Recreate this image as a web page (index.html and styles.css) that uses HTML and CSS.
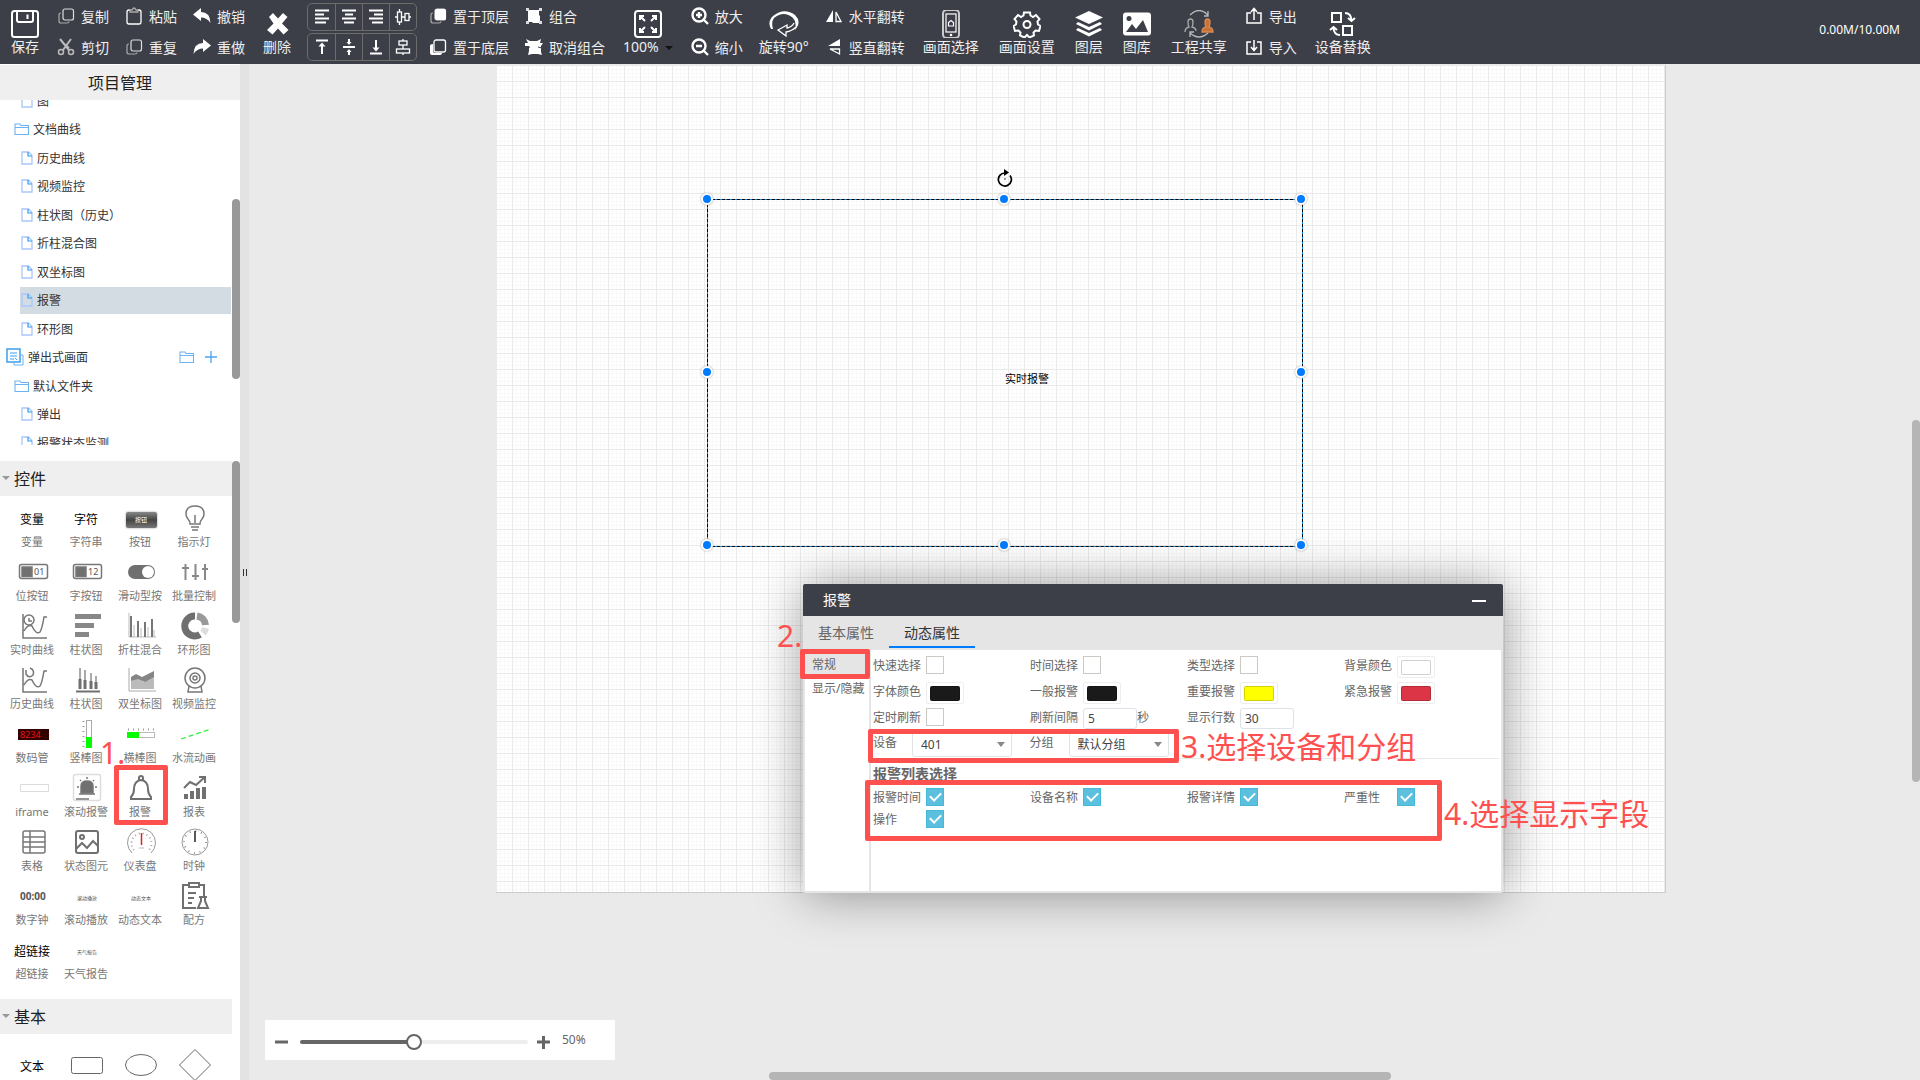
FILE: index.html
```html
<!DOCTYPE html>
<html lang="zh-CN">

<head>
    <meta charset="UTF-8">
    <meta name="viewport" content="width=device-width, initial-scale=1.0">
    <title>项目管理</title>
    <link rel="stylesheet" href="styles.css">
</head>

<body>

    <!-- shared icons -->
    <svg class="sprite">
        <symbol id="i-file" viewBox="0 0 12 14">
            <path d="M1 1h6.500l3.500 3.500V13H1z" fill="none" stroke="#a9c6fb" stroke-width="1.300" />
            <path d="M7 1v4h4" fill="none" stroke="#2f9bf0" stroke-width="1.200" />
        </symbol>
        <symbol id="i-folder" viewBox="0 0 16 14">
            <path d="M1 12.500V2h5l1 1.500h7.500v9z" fill="none" stroke="#6db3f2" stroke-width="1.100" />
            <path d="M1 5.500h13.500" stroke="#6db3f2" />
        </symbol>
        <symbol id="i-copy" viewBox="0 0 18 18">
            <rect x="6" y="2" width="10.500" height="11" rx="2" fill="none" stroke="#ddd" stroke-width="1.200" />
            <path d="M4 6q-2 0-2 2v6q0 2 2 2h6q2 0 2-1.500" fill="none" stroke="#aaa" stroke-width="1.200" />
        </symbol>
        <symbol id="i-undo" viewBox="0 0 18 18">
            <path d="M0 7.500L8 1v4q9 0 9.500 11Q14 10.500 8 10.500V14z" fill="#fff" />
        </symbol>
    </svg>

    <header class="toolbar">
        <button class="big">
            <svg viewBox="0 0 28 28" class="line"><rect x="1" y="1" width="26" height="26" rx="2.500" /><path d="M6 1v9q0 2 2 2h12q2 0 2-2V1M16.500 4.500v4.500" /></svg>
            <span>保存</span>
        </button>
        <div class="pairs">
            <button><svg><use href="#i-copy" /></svg>复制</button>
            <button><svg viewBox="0 0 18 18" class="line gray"><path d="M3 1l9 11M14 1L6 12M6 5l6 5" stroke-width="2" /><circle cx="4" cy="14" r="2.500" /><circle cx="14" cy="14" r="2.500" /></svg>剪切</button>
        </div>
        <div class="pairs">
            <button><svg viewBox="0 0 18 18" class="line thin"><path d="M5 3H4Q2 3 2 5v10q0 2 2 2h10q2 0 2-2V5q0-2-2-2h-1" /><path d="M5 5V3h2q2-4 4 0h2v2z" stroke="#aaa" /></svg>粘贴</button>
            <button><svg><use href="#i-copy" /></svg>重复</button>
        </div>
        <div class="pairs">
            <button><svg><use href="#i-undo" /></svg>撤销</button>
            <button><svg class="flip"><use href="#i-undo" /></svg>重做</button>
        </div>
        <button class="big">
            <svg viewBox="0 0 28 28"><path d="M6 7l4-4 5 5.500L20 3l4.500 4-5.500 6.500 6.500 6.500-5 4.500-5.500-6-5.500 6L4 20l6.500-6.500z" fill="#fff" /></svg>
            <span>删除</span>
        </button>
        <div class="align">
            <div class="align-row">
                <button aria-label="左对齐"><svg viewBox="0 0 16 16" class="line"><path d="M1 1.500h14M1 5.500h9M1 9.500h14M1 13.500h11" /></svg></button>
                <button aria-label="居中对齐"><svg viewBox="0 0 16 16" class="line"><path d="M1 1.500h14M4 5.500h8M1 9.500h14M3 13.500h10" /></svg></button>
                <button aria-label="右对齐"><svg viewBox="0 0 16 16" class="line"><path d="M1 1.500h14M6 5.500h9M1 9.500h14M4 13.500h11" /></svg></button>
                <button aria-label="水平居中"><svg viewBox="0 0 16 16" class="line thin"><rect x="2.500" y="3" width="4" height="10" /><rect x="10" y="4.500" width="4" height="7" /><path d="M0 8h2.500M6.500 8H10M14 8h2M4.500 0v3M4.500 13v3" /></svg></button>
            </div>
            <div class="align-row">
                <button aria-label="顶部对齐"><svg viewBox="0 0 16 16" class="line"><path d="M2 1.500h12M8 6v9" /><path d="M4.500 7.500L8 3.500l3.500 4z" class="solid" /></svg></button>
                <button aria-label="中部对齐"><svg viewBox="0 0 16 16" class="line"><path d="M2 8h12M8 0v3M8 13v3" /><path d="M5.500 3L8 6l2.500-3zM5.500 13L8 10l2.500 3z" class="solid" /></svg></button>
                <button aria-label="底部对齐"><svg viewBox="0 0 16 16" class="line"><path d="M2 14.500h12M8 1v9" /><path d="M4.500 8.500L8 12.500l3.500-4z" class="solid" /></svg></button>
                <button aria-label="垂直居中"><svg viewBox="0 0 16 16" class="line thin"><rect x="4" y="2" width="8" height="4" /><rect x="1.500" y="10" width="13" height="4" /><path d="M8 0v2M8 6v4M8 14v2" /></svg></button>
            </div>
        </div>
        <div class="pairs">
            <button><svg viewBox="0 0 18 18"><use href="#i-copy" /><rect x="6" y="2" width="11" height="11" rx="2" fill="#fff" /></svg>置于顶层</button>
            <button><svg viewBox="0 0 18 18"><path d="M1 8q0-2 3-2v7q0 2 2 2h7q0 2-2 2H3q-2 0-2-2z" fill="#fff" /><rect x="5" y="2" width="11.500" height="12" rx="2" class="line thin" /></svg>置于底层</button>
        </div>
        <div class="pairs">
            <button><svg viewBox="0 0 18 18"><path d="M3 3h11v5l1 1v7H8l-1-1H3z" fill="#fff" /><path d="M1 1h3v3H1zM14 1h3v3h-3zM1 14h3v3H1zM14 14h3v3h-3z" fill="#ddd" /></svg>组合</button>
            <button><svg viewBox="0 0 18 18"><path d="M1 1l4 2h7l4-2-1 4h3l-2 3v6l1 3-4-1H7l-4 1 1-4V8H0V5h3z" fill="#fff" /><path d="M13 9l4 1M1 10l4-1" stroke="#3d3f48" /></svg>取消组合</button>
        </div>
        <button class="big">
            <svg viewBox="0 0 28 28" class="line"><rect x="1" y="1" width="26" height="26" rx="3" /><path d="M11 11L6.500 6.500M6 10V6h4M17 11l4.500-4.500M18 6h4v4M11 17l-4.500 4.500M6 18v4h4M17 17l4.500 4.500M22 18v4h-4" /></svg>
            <span>100%<i class="caret"></i></span>
        </button>
        <div class="pairs">
            <button><svg viewBox="0 0 18 18" class="line bold"><circle cx="8" cy="8" r="6.500" /><path d="M13 13l4 4M5 8h6M8 5v6" /></svg>放大</button>
            <button><svg viewBox="0 0 18 18" class="line bold"><circle cx="8" cy="8" r="6.500" /><path d="M13 13l4 4M5 8h6" /></svg>缩小</button>
        </div>
        <button class="big tight">
            <svg viewBox="0 0 30 28" class="wide"><path d="M2 19Q-2 12 4 6q11-9 22-1 6 6 2 12l-2 3q2-8-2-12Q15 0 5 8q-3 4-1 11z" fill="#fff" /><path d="M27 17q-4 4-10 5v4l-8-6 9-5v3q5-1 7-5" class="line thin" /></svg>
            <span>旋转90°</span>
        </button>
        <div class="pairs">
            <button><svg viewBox="0 0 18 18"><path d="M8 3v12H1z" fill="#fff" /><path d="M11 5v9.500h5z" class="line thin" /></svg>水平翻转</button>
            <button><svg viewBox="0 0 18 18"><path d="M15 1v7H3z" fill="#fff" /><path d="M5 11h9.500v5z" class="line thin" /></svg>竖直翻转</button>
        </div>
        <button class="big">
            <svg viewBox="0 0 28 28" class="line"><rect x="6" y="0" width="16" height="28" rx="3.500" stroke="#ccc" /><rect x="9" y="4" width="10" height="18" stroke-width="1.200" /><path d="M11.500 12.500l2.500-2 2.500 2V16h-5z" stroke-width="1.200" /><circle cx="14" cy="25" r="1.300" class="solid" /></svg>
            <span>画面选择</span>
        </button>
        <button class="big">
            <svg viewBox="0 0 28 28" class="line"><path d="M11 2.500h6l.500 3 2.500 1.500 3-2 3.500 4-2 2.500.500 3 2.500 1.500-1.500 5-3.500-.500-2 2 .500 3-4.500 2-2.500-2.500-2.500 2.500-4.500-2 .500-3-2-2-3.500.500-1.500-5L3 14.500l.500-3-2-2.500L5 5l3 2 2.500-1.500z" /><circle cx="14" cy="14.500" r="3.500" /></svg>
            <span>画面设置</span>
        </button>
        <button class="big">
            <svg viewBox="0 0 28 28"><path d="M14 1l14 6.500L14 14 0 7.500z" fill="#fff" /><path d="M3 12l-2 2 13 6.500L27 14l-2-2-11 5zM3 18l-2 2 13 6.500L27 20l-2-2-11 5z" fill="#fff" /></svg>
            <span>图层</span>
        </button>
        <button class="big">
            <svg viewBox="0 0 28 28"><rect x="0" y="2.500" width="28" height="23" rx="3" fill="#fff" /><circle cx="6" cy="8.500" r="2.500" fill="#3d3f48" /><path d="M3 22l6-8 4 5 7-9 5 12z" fill="#3d3f48" /></svg>
            <span>图库</span>
        </button>
        <button class="big">
            <svg viewBox="0 0 30 28" class="wide line thin"><path d="M6 5q9-9 18 0M24 1v5h-4M6 23q9 8 18 0M6 27v-5h4" stroke="#bbb" /><path d="M1 22q0-4 4-5-1-2-1-5 0-3 2.500-3T9 12q0 3-1 5 4 1 4 4" stroke="#aaa" /><path d="M18 22q0-4 4-5-1-2-1-5 0-3 2.500-3T26 12q0 3-1 5 4 1 4 5z" fill="#c87137" stroke="#d98a55" /></svg>
            <span>工程共享</span>
        </button>
        <div class="pairs">
            <button><svg viewBox="0 0 18 18" class="line"><path d="M6 6H2v10h14V6h-4M9 13V2M6 5l3-3.500L12 5" stroke-width="1.500" /></svg>导出</button>
            <button><svg viewBox="0 0 18 18" class="line"><path d="M6 4H2v12h14V4h-4M9 2v10M6 9l3 3.500L12 9" stroke-width="1.500" /></svg>导入</button>
        </div>
        <button class="big">
            <svg viewBox="0 0 28 28" class="line"><rect x="3" y="3" width="9" height="9" /><rect x="14" y="16" width="9" height="9" /><path d="M16 3q6 0 6.500 7M19 8l3.500 3L26 8M11 25q-6 0-6.500-7M1 20l3.500-3L8 20" /></svg>
            <span>设备替换</span>
        </button>
        <span class="quota">0.00M/10.00M</span>
    </header>

    <main>
        <aside>
            <h2 class="side-title">项目管理</h2>
            <div class="tree-box">
                <ul class="tree">
                    <li class="page"><svg><use href="#i-file" /></svg>图</li>
                    <li class="folder"><svg><use href="#i-folder" /></svg>文档曲线</li>
                    <li class="page"><svg><use href="#i-file" /></svg>历史曲线</li>
                    <li class="page"><svg><use href="#i-file" /></svg>视频监控</li>
                    <li class="page"><svg><use href="#i-file" /></svg>柱状图（历史）</li>
                    <li class="page"><svg><use href="#i-file" /></svg>折柱混合图</li>
                    <li class="page"><svg><use href="#i-file" /></svg>双坐标图</li>
                    <li class="page active"><svg><use href="#i-file" /></svg>报警</li>
                    <li class="page"><svg><use href="#i-file" /></svg>环形图</li>
                    <li class="root">
                        <svg viewBox="0 0 18 18" fill="none" stroke="#3ba0f0"><path d="M1 1h13v13H1z" stroke-width="1.500" /><path d="M4 5h7M4 8h7M4 11h4M9 10l2 2" /><path d="M14.500 7H17v10H8v-2.500" stroke="#6db3f2" /></svg>
                        <span>弹出式画面</span>
                        <button aria-label="新建文件夹"><svg><use href="#i-folder" /></svg></button>
                        <button aria-label="新建画面"><svg viewBox="0 0 16 14"><path d="M8 1v12M2 7h12" stroke="#4aa3f0" stroke-width="1.300" /></svg></button>
                    </li>
                    <li class="folder"><svg><use href="#i-folder" /></svg>默认文件夹</li>
                    <li class="page"><svg><use href="#i-file" /></svg>弹出</li>
                    <li class="page"><svg><use href="#i-file" /></svg>报警状态监测</li>
                </ul>
                <i class="thumb thumb-tree"></i>
            </div>

            <div class="widgets">
                <h3><i class="arrow"></i>控件</h3>
                <div class="items">
                    <button><b>变量</b><span>变量</span></button>
                    <button><b>字符</b><span>字符串</span></button>
                    <button><em class="demo-btn">按钮</em><span>按钮</span></button>
                    <button><svg viewBox="0 0 32 32" class="g1"><path d="M11 22q0-3-2-5-2-2-2-5 0-8 9-8t9 8q0 3-2 5-2 2-2 5zM12 25h8M13 28h6M16 13v8" /></svg><span>指示灯</span></button>

                    <button><svg viewBox="0 0 32 32" class="g1"><rect x="2.500" y="8.500" width="28" height="14" rx="2" /><rect x="5" y="11" width="10" height="9.500" class="fill" /><text x="17" y="19" font-size="9">01</text></svg><span>位按钮</span></button>
                    <button><svg viewBox="0 0 32 32" class="g1"><rect x="2.500" y="8.500" width="28" height="14" rx="2" /><rect x="5" y="11" width="10" height="9.500" class="fill" /><text x="17" y="19" font-size="9">12</text></svg><span>字按钮</span></button>
                    <button><svg viewBox="0 0 32 32"><rect x="3" y="9" width="27" height="14" rx="7" fill="#707070" /><circle cx="23" cy="16" r="6" fill="#fff" /></svg><span>滑动型按</span></button>
                    <button><svg viewBox="0 0 32 32" class="g2 soft"><path d="M6.500 8v16M16.500 8v16M26 8v16M3 12h7M13 20h7M23 13h6" /></svg><span>批量控制</span></button>

                    <button><svg viewBox="0 0 32 32" class="g1"><path d="M6 4v24h24M7 21q4-7 8-5 4 9 8 6 2-3 4-15h3" /><circle cx="12" cy="10" r="5" /><path d="M12 8v3h3" /></svg><span>实时曲线</span></button>
                    <button><svg viewBox="0 0 32 32"><path d="M4 4h26v5H4zM4 13h19v5H4zM4 22h14v5H4z" fill="#888" /></svg><span>柱状图</span></button>
                    <button><svg viewBox="0 0 32 32" fill="none"><path d="M4 3v24h27" stroke="#bbb" /><path d="M6 6v21M13 11v16M20 12v15M27 9v18" stroke="#777" stroke-width="2" /><path d="M9 15v12M16 18v9M23 17v10M29 20v7" stroke="#bbb" /></svg><span>折柱混合</span></button>
                    <button><svg viewBox="0 0 32 32" fill="none" stroke-width="7"><path d="M16 6A10 10 0 1 0 21 24.500" stroke="#6f6f6f" /><path d="M18 6A10 10 0 0 1 26.500 15" stroke="#999" /><path d="M26.500 18A10 10 0 0 1 24 23" stroke="#ddd" /></svg><span>环形图</span></button>

                    <button><svg viewBox="0 0 32 32" class="g1"><path d="M6 4v24h24M7 21q4-7 8-5 4 9 8 6 2-3 4-15h3M9 6v4q3 5 7 1 2-5-3-7" /></svg><span>历史曲线</span></button>
                    <button><svg viewBox="0 0 32 32" fill="none"><path d="M9 4v21M14 6v19M20 9v16M25 12v13" stroke="#aaa" stroke-width="2" /><path d="M9 15v10M14 16v9M20 17v8M25 18v7" stroke="#707070" stroke-width="3" /><path d="M5 27.500h24" stroke="#707070" stroke-width="2" /></svg><span>柱状图</span></button>
                    <button><svg viewBox="0 0 32 32"><path d="M4 4v23h27" fill="none" stroke="#aaa" /><path d="M6 25v-8l7-3 6 4 10-7v14z" fill="#bbb" /><path d="M6 17v-4l5-3 6 3 12-6v6l-9 5-7-3z" fill="#858585" /></svg><span>双坐标图</span></button>
                    <button><svg viewBox="0 0 32 32" class="g1"><circle cx="16" cy="14" r="10" /><circle cx="16" cy="14" r="5" /><circle cx="16" cy="14" r="2" /><path d="M10 22l-1 6h14l-1-6" /></svg><span>视频监控</span></button>

                    <button><svg viewBox="0 0 32 32"><rect x="1" y="11" width="31" height="11" fill="#300" /><text x="3" y="20" font-size="9" class="led">8234</text></svg><span>数码管</span></button>
                    <button><svg viewBox="0 0 32 32"><rect x="15.500" y="2.500" width="5" height="27" fill="none" stroke="#aaa" /><rect x="15" y="19" width="6" height="11" fill="#0f0" /><path d="M12.500 3v27" stroke="#999" stroke-width="2" stroke-dasharray="1 4" /></svg><span>竖棒图</span></button>
                    <button><svg viewBox="0 0 32 32"><rect x="2.500" y="14.500" width="27" height="5" fill="none" stroke="#bbb" /><rect x="2" y="14" width="12" height="6" fill="#0f0" /><path d="M3 11.500h28" stroke="#999" stroke-width="2" stroke-dasharray="1 4" /></svg><span>横棒图</span></button>
                    <button><svg viewBox="0 0 32 32"><path d="M2 21l30-10" stroke="#3e4" stroke-width="1.300" stroke-dasharray="5 3" /></svg><span>水流动画</span></button>

                    <button><svg viewBox="0 0 32 32"><rect x="3.500" y="12.500" width="28" height="7" fill="#fff" stroke="#ddd" /></svg><span>iframe</span></button>
                    <button><svg viewBox="0 0 32 32" class="g1"><rect x="2.500" y="2.500" width="27" height="26" rx="2" stroke="#ddd" /><path d="M10 21v-7q0-5 6-5t6 5v7z" class="fill" /><path d="M8 22h16M16 5v2M9 8l1 1M23 8l-1 1M6 15h2M24 15h2M5 27h13" /></svg><span>滚动报警</span></button>
                    <button><svg viewBox="0 0 32 32" class="g2"><path d="M6 27v-2q3-3 3-8 0-8 7-9 7 1 7 9 0 5 3 8v2z" /><path d="M14 8V6q0-2 2-2t2 2v2" /></svg><span>报警</span></button>
                    <button><svg viewBox="0 0 32 32" class="g2"><path d="M5 16l6-6 6 3 9-8M20 5h6v6" /><path d="M7 27v-5M13 27v-8M19 27v-11M25 27V15" stroke-width="4" /></svg><span>报表</span></button>

                    <button><svg viewBox="0 0 32 32" class="g1"><rect x="6" y="5" width="22" height="22" rx="2" /><path d="M6 11h22M6 16h22M6 21h22M13 5v22" /></svg><span>表格</span></button>
                    <button><svg viewBox="0 0 32 32" class="g2"><rect x="5" y="5" width="22" height="22" rx="2" /><circle cx="11" cy="11" r="2" /><path d="M5 23l6-6 5 5 6-7 5 5" /></svg><span>状态图元</span></button>
                    <button><svg viewBox="0 0 32 32" fill="none"><path d="M7 27A14 14 0 1 1 26 27" stroke="#999" /><path d="M9 24A10 10 0 1 1 24 24" stroke="#aaa" stroke-width="2" stroke-dasharray="1 3" /><path d="M16.500 7v12" stroke="#d22" stroke-width="1.500" /><path d="M14 22h5" stroke="#bbb" /></svg><span>仪表盘</span></button>
                    <button><svg viewBox="0 0 32 32" fill="none"><circle cx="16" cy="16" r="13" stroke="#999" /><circle cx="16" cy="16" r="11" stroke="#777" stroke-width="1.500" stroke-dasharray="1 4.760" /><path d="M16 5v11" stroke="#222" stroke-width="1.500" /></svg><span>时钟</span></button>

                    <button><svg viewBox="0 0 32 32"><text x="3" y="20" font-size="10" font-weight="bold">00:00</text></svg><span>数字钟</span></button>
                    <button><svg viewBox="0 0 32 32"><text x="6" y="20" font-size="5">滚动播放</text></svg><span>滚动播放</span></button>
                    <button><svg viewBox="0 0 32 32"><text x="6" y="20" font-size="5">动态文本</text></svg><span>动态文本</span></button>
                    <button><svg viewBox="0 0 32 32" class="g2"><path d="M10 5H4v23h13M20 5h5v11M10 3h10v4H10zM9 13h8M9 18h6M9 23h4M20 17h8M22 17v4l-3 7h10l-3-7v-4" /></svg><span>配方</span></button>

                    <button><b>超链接</b><span>超链接</span></button>
                    <button><svg viewBox="0 0 32 32"><text x="6" y="20" font-size="5">天气报告</text></svg><span>天气报告</span></button>
                </div>
                <h3><i class="arrow"></i>基本</h3>
                <div class="items basic">
                    <button><b>文本</b></button>
                    <button aria-label="矩形"><svg viewBox="0 0 32 32" class="g0"><rect x=".500" y="8.500" width="31" height="16" rx="2" /></svg></button>
                    <button aria-label="椭圆"><svg viewBox="0 0 32 32" class="g0"><ellipse cx="16" cy="16" rx="15.500" ry="10.500" /></svg></button>
                    <button aria-label="菱形"><svg viewBox="0 0 32 32" class="g0"><path d="M16 .500L31.500 16 16 31.500.500 16z" /></svg></button>
                </div>
                <i class="thumb thumb-widgets"></i>
            </div>
        </aside>

        <div class="splitter"><i></i></div>

        <section class="workspace">
            <div class="sheet">
                <div class="selection">
                    <span>实时报警</span>
                    <svg class="rotate" viewBox="0 0 18 18" fill="none"><path d="M9 4a6.500 6.500 0 1 0 5 2.500" stroke="#000" stroke-width="1.700" /><path d="M8 0l5 3.500L8 7z" fill="#000" /><circle cx="9" cy="10" r=".700" fill="#000" /></svg>
                    <i class="handle nw"></i><i class="handle n"></i><i class="handle ne"></i>
                    <i class="handle w"></i><i class="handle e"></i>
                    <i class="handle sw"></i><i class="handle s"></i><i class="handle se"></i>
                </div>
            </div>

            <form class="zoombar">
                <button type="button" aria-label="缩小"><svg viewBox="0 0 14 14"><path d="M0 7h13" stroke="#666" stroke-width="3" /></svg></button>
                <input type="range" min="0" max="100" value="50" aria-label="缩放">
                <button type="button" aria-label="放大"><svg viewBox="0 0 14 14"><path d="M0 7h13M6.500 1v13" stroke="#666" stroke-width="3" /></svg></button>
                <output>50%</output>
            </form>
            <i class="thumb thumb-right"></i>
            <i class="thumb thumb-bottom"></i>

            <div class="dialog">
                <div class="dialog-title">报警<button aria-label="最小化"></button></div>
                <nav class="tabs">
                    <a href="#base">基本属性</a>
                    <a href="#dynamic" class="on">动态属性</a>
                </nav>
                <div class="dialog-body">
                    <nav class="side-tabs">
                        <a href="#general" class="on">常规</a>
                        <a href="#visible">显示/隐藏</a>
                    </nav>
                    <form class="props">
                        <div class="fields">
                            <div><label for="f1">快速选择</label><input type="checkbox" id="f1"></div>
                            <div><label for="f2">时间选择</label><input type="checkbox" id="f2"></div>
                            <div><label for="f3">类型选择</label><input type="checkbox" id="f3"></div>
                            <div><label for="f4">背景颜色</label><input type="color" id="f4" value="#ffffff"></div>
                            <div><label for="f5">字体颜色</label><input type="color" id="f5" value="#1a1a1a"></div>
                            <div><label for="f6">一般报警</label><input type="color" id="f6" value="#1a1a1a"></div>
                            <div><label for="f7">重要报警</label><input type="color" id="f7" value="#ffff00"></div>
                            <div><label for="f8">紧急报警</label><input type="color" id="f8" value="#dc3545"></div>
                            <div><label for="f9">定时刷新</label><input type="checkbox" id="f9"></div>
                            <div><label for="f10">刷新间隔</label><input type="text" id="f10" value="5"><span>秒</span></div>
                            <div><label for="f11">显示行数</label><input type="text" id="f11" value="30"></div>
                        </div>
                        <div class="selects">
                            <div><label for="dev">设备</label><span class="select"><select id="dev"><option>401</option></select></span></div>
                            <div><label for="grp">分组</label><span class="select"><select id="grp"><option>默认分组</option></select></span></div>
                        </div>
                        <h4>报警列表选择</h4>
                        <div class="columns">
                            <div><label for="c1">报警时间</label><input type="checkbox" id="c1" checked></div>
                            <div><label for="c2">设备名称</label><input type="checkbox" id="c2" checked></div>
                            <div><label for="c3">报警详情</label><input type="checkbox" id="c3" checked></div>
                            <div><label for="c4">严重性</label><input type="checkbox" id="c4" checked></div>
                            <div><label for="c5">操作</label><input type="checkbox" id="c5" checked></div>
                        </div>
                    </form>
                </div>
                <!-- step marks over the dialog -->
                <i class="mark mark2"></i><span class="step step2">2.</span>
                <i class="mark mark3"></i><span class="step step3">3.选择设备和分组</span>
                <i class="mark mark4"></i><span class="step step4">4.选择显示字段</span>
            </div>
        </section>

        <i class="mark mark1"></i><span class="step step1">1.</span>
    </main>

</body>

</html>
```

FILE: styles.css
```css
* {
    box-sizing: border-box;
}

body {
    margin: 0;
    height: 100vh;
    display: flex;
    flex-direction: column;
    overflow: hidden;
    font-family: "Noto Sans", "Noto Sans CJK SC", sans-serif;
    font-size: 12px;
    color: #333;
}

button {
    background: none;
    border: 0;
    padding: 0;
    font: inherit;
    color: inherit;
    cursor: pointer;
}

a {
    color: inherit;
    text-decoration: none;
}

ul, h2, h3, h4 {
    margin: 0;
    padding: 0;
    font-weight: normal;
    list-style: none;
}

i, em {
    font-style: normal;
}

.sprite {
    position: absolute;
    width: 0;
    height: 0;
}

/* toolbar */
.toolbar {
    flex: none;
    height: 64px;
    display: flex;
    align-items: flex-start;
    gap: 16px;
    padding: 0 20px 0 9px;
    background: #3d3f48;
    color: #eee;
    font-size: 14px;
    white-space: nowrap;
}

.toolbar svg {
    flex: none;
    display: block;
}

.line {
    fill: none;
    stroke: #fff;
    stroke-width: 2;
}

.line.thin {
    stroke-width: 1.3px;
}

.line.bold {
    stroke-width: 2.4px;
}

.line.gray {
    stroke: #bbb;
    stroke-width: 1.5px;
}

.line .solid {
    fill: #fff;
    stroke: none;
}

.big {
    display: flex;
    flex-direction: column;
    align-items: center;
    padding: 10px 2px 0;
}

.big.tight {
    padding: 10px 0 0;
}

.big svg {
    width: 28px;
    height: 28px;
}

.big svg.wide {
    width: 30px;
}

.big span {
    line-height: 18px;
}

.caret {
    display: inline-block;
    margin-left: 6px;
    border: 4px solid transparent;
    border-top-color: #111;
    border-bottom-width: 0;
    vertical-align: 2px;
}

.pairs button {
    display: flex;
    align-items: center;
    gap: 6px;
    height: 31px;
}

.pairs svg {
    width: 18px;
    height: 18px;
}

.pairs .flip {
    transform: scaleX(-1);
}

.align {
    display: grid;
    gap: 2px;
    padding-top: 3px;
    margin: 0 -4px 0 -2px;
}

.align-row {
    display: flex;
    border: 1px solid #6e6b6d;
    border-radius: 5px;
}

.align-row button {
    width: 27px;
    height: 26px;
    display: grid;
    place-items: center;
}

.align-row button + button {
    border-left: 1px solid #6e6b6d;
}

.align-row svg {
    width: 16px;
    height: 16px;
}

.quota {
    margin-left: auto;
    line-height: 60px;
    font-size: 12px;
    color: #fff;
}

/* left side */
main {
    flex: 1;
    min-height: 0;
    display: flex;
    position: relative;
    background: #eaeaea;
}

aside {
    width: 240px;
    flex: none;
    display: flex;
    flex-direction: column;
    background: #fff;
}

.side-title {
    margin-top: 1px;
    height: 35px;
    line-height: 37px;
    font-size: 16px;
    text-align: center;
    color: #222;
    background: #efefef;
}

.tree-box {
    position: relative;
    height: 345px;
    overflow: hidden;
    margin-bottom: 16px;
}

.tree {
    height: 369px;
    margin: -13px 9px 0 6px;
    display: flex;
    flex-direction: column;
    justify-content: space-between;
}

.tree li {
    height: 27px;
    display: flex;
    align-items: center;
    gap: 3px;
}

.tree svg {
    width: 16px;
    height: 14px;
    display: block;
}

.tree .page {
    margin-left: 14px;
    padding-left: 1px;
    gap: 4px;
}

.tree .page svg {
    width: 12px;
}

.tree .folder {
    padding-left: 8px;
}

.tree .active {
    background: #d3dce3;
}

.tree .root {
    gap: 8px;
    padding-right: 12px;
}

.tree .root > svg {
    width: 18px;
    height: 18px;
    margin-right: -4px;
}

.tree .root span {
    flex: 1;
}

.thumb {
    position: absolute;
    width: 8px;
    border-radius: 4px;
    background: #999;
}

.thumb-tree {
    right: 0;
    top: 99px;
    height: 180px;
}

.thumb-widgets {
    right: 0;
    top: 0;
    height: 162px;
}

.widgets {
    position: relative;
    flex: 1;
    min-height: 0;
    overflow: hidden;
    padding-right: 8px;
}

.widgets h3 {
    display: flex;
    align-items: center;
    gap: 4px;
    height: 35px;
    padding: 0 0 2px 2px;
    font-size: 16px;
    color: #222;
    background: #efefef;
}

.arrow {
    border: 4px solid transparent;
    border-top-color: #999;
    border-bottom-width: 0;
}

.items {
    display: grid;
    grid-template-columns: repeat(4, 54px);
    padding: 6px 0 11px 5px;
}

.items.basic {
    padding-top: 15px;
}

.items button {
    height: 54px;
    display: flex;
    flex-direction: column;
    align-items: center;
    white-space: nowrap;
}

.items span {
    line-height: 16px;
    font-size: 11px;
    color: #777;
}

.items svg, .demo-btn {
    margin-left: 2px;
}

.items svg {
    width: 32px;
    height: 32px;
    display: block;
}

.items b {
    line-height: 36px;
    height: 32px;
    font-weight: normal;
    color: #000;
}

.items text {
    fill: #555;
}

.items .led {
    fill: #e11;
}

.demo-btn {
    width: 31px;
    height: 16px;
    margin-top: 10px;
    margin-bottom: 6px;
    line-height: 16px;
    font-size: 6px;
    color: #fff;
    border-radius: 2px;
    background: linear-gradient(#888, #444 50%, #777);
    box-shadow: 0 0 2px #888;
}

.g0, .g1, .g2 {
    fill: none;
    stroke: #666;
}

.g1 {
    stroke: #777;
    stroke-width: 1.5px;
}

.g2 {
    stroke: #707070;
    stroke-width: 2px;
}

.g2.soft {
    stroke: #888;
}

.g1 .fill {
    fill: #707070;
}

.g1 text {
    stroke: none;
}

.splitter {
    flex: none;
    width: 9px;
    display: flex;
    align-items: center;
    justify-content: center;
    background: #e3e3e3;
}

.splitter i {
    width: 4px;
    height: 7px;
    border: solid #333;
    border-width: 0 1px;
}

/* drawing area */
.workspace {
    flex: 1;
    position: relative;
    min-width: 0;
    padding: 1px 7px 0 0;
}

.sheet {
    position: relative;
    width: 1170px;
    height: 828px;
    margin: 0 auto;
    border: solid #ccc;
    border-width: 0 1px 1px 0;
    background-color: #fff;
    background-image:
        linear-gradient(#eaeaea 1px, transparent 1px),
        linear-gradient(90deg, #eaeaea 1px, transparent 1px),
        linear-gradient(#f9f9f9 1px, transparent 1px),
        linear-gradient(90deg, #f9f9f9 1px, transparent 1px);
    background-size: 16px 16px, 16px 16px, 4px 4px, 4px 4px;
}

.selection {
    position: absolute;
    left: 211px;
    top: 134px;
    width: 596px;
    height: 348px;
    border: 1px solid #1490e0;
    outline: 1px dashed #000;
    outline-offset: -1px;
}

.selection span {
    position: absolute;
    left: 50%;
    top: 50%;
    line-height: 12px;
    font-size: 11px;
    color: #000;
}

.rotate {
    position: absolute;
    left: 50%;
    top: -31px;
    width: 18px;
    height: 18px;
    margin-left: -9px;
}

.handle {
    position: absolute;
    width: 12px;
    height: 12px;
    margin: -7px;
    border: 2px solid #fff;
    border-radius: 50%;
    background: #007bff;
    box-shadow: 0 0 2px #999;
}

.nw, .n, .ne { top: 0; }
.w, .e { top: 50%; }
.sw, .s, .se { top: 100%; }
.nw, .w, .sw { left: 0; }
.n, .s { left: 50%; }
.ne, .e, .se { left: 100%; }

.zoombar {
    position: absolute;
    left: 16px;
    bottom: 20px;
    height: 40px;
    width: 350px;
    display: flex;
    align-items: center;
    gap: 11px;
    padding: 4px 10px 0;
    background: #fff;
    color: #666;
}

.zoombar svg {
    display: block;
    width: 14px;
    height: 14px;
}

.zoombar input {
    appearance: none;
    width: 228px;
    height: 4px;
    margin: 0 -2px 0 0;
    border-radius: 2px;
    background: linear-gradient(90deg, #666 50%, #eee 50%);
}

.zoombar input::-webkit-slider-thumb {
    appearance: none;
    width: 16px;
    height: 16px;
    border: 2px solid #666;
    border-radius: 50%;
    background: #fff;
}

.zoombar output {
    line-height: 16px;
    padding-bottom: 4px;
}

.thumb-right {
    right: 0;
    top: 356px;
    height: 362px;
    background: #b5b5b5;
}

.thumb-bottom {
    left: 520px;
    bottom: 0;
    width: 622px;
    height: 8px;
    background: #b5b5b5;
}

/* property dialog */
.dialog {
    position: absolute;
    left: 554px;
    top: 520px;
    width: 700px;
    border-radius: 2px;
    background: #e5e5e5;
    box-shadow: 1px 1px 50px rgba(0, 0, 0, .4);
}

.dialog-title {
    display: flex;
    justify-content: space-between;
    align-items: center;
    height: 32px;
    padding: 0 17px 2px 20px;
    border-radius: 2px 2px 0 0;
    font-size: 14px;
    color: #fff;
    background: #3d3f48;
}

.dialog-title button {
    width: 14px;
    height: 2px;
    margin-top: 4px;
    background: #fff;
}

.tabs {
    display: flex;
    height: 34px;
    font-size: 14px;
    color: #666;
}

.tabs a {
    width: 86px;
    height: 32px;
    line-height: 34px;
    text-align: center;
}

.tabs .on {
    color: #333;
    border-bottom: 2px solid #007bff;
}

.dialog-body {
    display: flex;
    gap: 2px;
    margin: 0 2px;
    padding-bottom: 2px;
    height: 243px;
    color: #666;
}

.side-tabs {
    width: 64px;
    background: #fff;
    white-space: nowrap;
}

.side-tabs a {
    display: block;
    height: 24px;
    line-height: 30px;
    padding-left: 7px;
}

.side-tabs .on {
    background: #e5e5e5;
}

.props {
    flex: 1;
    background: #fff;
}

.fields, .columns {
    display: grid;
    grid-template-columns: repeat(4, 1fr);
    padding: 6px 0 0 2px;
}

.fields {
    row-gap: 4px;
}

.fields > div, .columns > div {
    display: flex;
    gap: 5px;
    height: 22px;
}

.fields label, .columns label {
    width: 48px;
    line-height: 20px;
    white-space: nowrap;
}

.fields span {
    line-height: 20px;
    margin-left: -5px;
}

.props input {
    margin: 0;
    font: inherit;
    color: #444;
}

.props input[type="checkbox"] {
    appearance: none;
    width: 18px;
    height: 18px;
    border: 1px solid #ccc9c4;
    background: #fff;
    display: grid;
    place-items: center;
}

.props input[type="checkbox"]:checked {
    border-color: #46b8da;
    background: #5bc0de;
}

.props input[type="checkbox"]:checked::before {
    content: "";
    width: 9px;
    height: 5px;
    border: solid #fff;
    border-width: 0 0 2px 2px;
    rotate: -45deg;
    margin-bottom: 3px;
}

.props input[type="color"] {
    appearance: none;
    width: 38px;
    height: 22px;
    padding: 3px 3px 2px;
    border: 1px solid #eee;
    border-radius: 2px;
    background: #fff;
}

.props input[type="color"]::-webkit-color-swatch-wrapper {
    padding: 0;
}

.props input[type="color"]::-webkit-color-swatch {
    border: 1px solid rgba(0, 0, 0, .18);
    border-radius: 2px;
}

.props input[type="text"] {
    width: 54px;
    height: 21px;
    padding: 0 4px;
    border: 1px solid #dde1e8;
    border-radius: 3px;
}

.selects {
    display: grid;
    grid-template-columns: repeat(4, 1fr);
    padding: 1px 0 1px 2px;
    margin-right: 2px;
    border-bottom: 1px solid #e9e9e9;
}

.selects > div {
    display: flex;
}

.selects label {
    width: 39px;
    line-height: 24px;
}

.select {
    position: relative;
}

.select::after {
    content: "";
    position: absolute;
    right: 7px;
    top: 11px;
    border: 4px solid transparent;
    border-top: 5px solid #888;
    border-bottom-width: 0;
}

.select select {
    appearance: none;
    width: 100px;
    height: 26px;
    padding: 1px 8px 0;
    border: 1px solid #e0e3e8;
    border-radius: 3px;
    font: inherit;
    color: #444;
    background: #fff;
}

.props h4 {
    padding-left: 2px;
    line-height: 29px;
    font-size: 14px;
    font-weight: bold;
}

.columns {
    padding-top: 0;
}

/* step marks */
.mark {
    position: absolute;
    border: 5px solid #ff5050;
    border-radius: 2px;
}

.step {
    position: absolute;
    line-height: 36px;
    font-size: 30px;
    color: #ff5050;
    white-space: nowrap;
}

.mark1 {
    left: 114px;
    top: 701px;
    width: 54px;
    height: 60px;
}

.step1 {
    left: 100px;
    top: 671px;
}

.mark2 {
    left: -3px;
    top: 65px;
    width: 70px;
    height: 30px;
}

.step2 {
    left: -26px;
    top: 34px;
}

.mark3 {
    left: 65px;
    top: 145px;
    width: 311px;
    height: 34px;
}

.step3 {
    left: 378px;
    top: 145px;
}

.mark4 {
    left: 62px;
    top: 196px;
    width: 577px;
    height: 61px;
}

.step4 {
    left: 641px;
    top: 212px;
}
```
